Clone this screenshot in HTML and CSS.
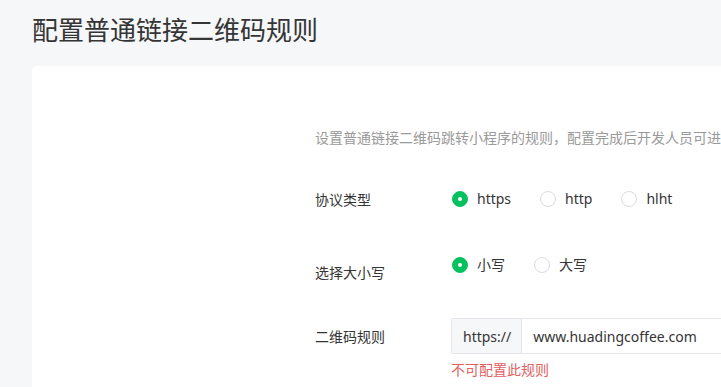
FILE: index.html
```html
<!DOCTYPE html>
<html>
<head>
<title>配置普通链接二维码规则</title>
<link rel="stylesheet" href="styles.css">
</head>
<body>
<div class="page">
  <h1 class="title">配置普通链接二维码规则</h1>

  <div class="card">
    <p class="desc">设置普通链接二维码跳转小程序的规则，配置完成后开发人员可进行测试与发布</p>

    <div class="row">
      <div class="label">协议类型</div>
      <div class="radios">
        <label class="radio checked"><span class="dot"></span>https</label>
        <label class="radio"><span class="dot"></span>http</label>
        <label class="radio"><span class="dot"></span>hlht</label>
      </div>
    </div>

    <div class="row row-case">
      <div class="label">选择大小写</div>
      <div class="radios">
        <label class="radio checked"><span class="dot"></span>小写</label>
        <label class="radio"><span class="dot"></span>大写</label>
      </div>
    </div>

    <div class="row row-rule">
      <div class="label">二维码规则</div>
      <div class="field">
        <div class="input-group">
          <span class="addon">https://</span>
          <input class="input" type="text" value="www.huadingcoffee.com">
        </div>
        <div class="error">不可配置此规则</div>
      </div>
    </div>
  </div>
</div>
</body>
</html>
```

FILE: styles.css
```css
html, body {
  margin: 0;
  height: 100%;
}

body {
  background-color: #f6f7f9;
  font-family: "Noto Sans", "Noto Sans CJK SC", sans-serif;
  color: #353535;
  overflow: hidden;
}

.page {
  padding-left: 32px;
}

.title {
  margin: 0;
  padding-top: 11px;
  height: 66px;
  box-sizing: border-box;
  font-size: 26px;
  font-weight: normal;
  line-height: 36px;
  color: #353535;
  font-family: "Noto Sans CJK SC", sans-serif;
}

.card {
  background-color: #fff;
  border-radius: 4px 0 0 0;
  padding: 61px 0 0 283px;
  height: 321px;
  box-sizing: border-box;
  overflow: hidden;
  white-space: nowrap;
}

.desc {
  margin: 0 0 42px;
  font-size: 14px;
  line-height: 20px;
  color: #9a9a9a;
  font-family: "Noto Sans CJK SC", sans-serif;
}

.row {
  display: flex;
  align-items: center;
}

.label {
  width: 136px;
  flex-shrink: 0;
  font-size: 14px;
  line-height: 20px;
  color: #353535;
  font-family: "Noto Sans CJK SC", sans-serif;
}

.radios {
  display: flex;
  align-items: center;
}

.radio {
  display: flex;
  align-items: center;
  margin-right: 28px;
  font-size: 14px;
  line-height: 20px;
  color: #353535;
  cursor: pointer;
}

.dot {
  width: 16px;
  height: 16px;
  box-sizing: border-box;
  border: 1px solid #dcdcdc;
  border-radius: 50%;
  margin-right: 9px;
  margin-left: 1px;
  position: relative;
}

.radio.checked .dot {
  background-color: #07c160;
  border-color: #07c160;
}

.radio.checked .dot::after {
  content: "";
  position: absolute;
  left: 5px;
  top: 5px;
  width: 4px;
  height: 4px;
  border-radius: 50%;
  background-color: #fff;
}

.row-case {
  margin-top: 46px;
  align-items: flex-start;
}

.row-case .label {
  margin-top: 7px;
}

.row-rule {
  margin-top: 36px;
  align-items: flex-start;
}

.row-rule .label {
  margin-top: 8px;
}

.field {
  flex: 1;
}

.input-group {
  display: flex;
  width: 400px;
  height: 36px;
  box-sizing: border-box;
  border: 1px solid #e4e6e9;
  border-radius: 2px;
}

.addon {
  display: flex;
  align-items: center;
  padding: 0 10px 0 11px;
  background-color: #f6f7f9;
  border-right: 1px solid #e4e6e9;
  font-size: 14px;
  color: #353535;
}

.input {
  flex: 1;
  border: none;
  outline: none;
  padding: 0 11px;
  font-family: "Noto Sans", sans-serif;
  font-size: 14px;
  color: #353535;
  background: transparent;
}

.error {
  margin-top: 5px;
  font-size: 14px;
  line-height: 20px;
  color: #e15f5f;
  font-family: "Noto Sans CJK SC", sans-serif;
}
```
